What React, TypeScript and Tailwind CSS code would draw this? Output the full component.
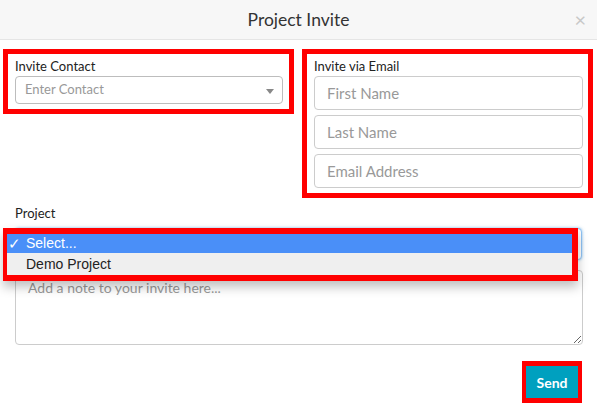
import React from 'react';

const inputCls =
  "block w-full h-[34px] rounded-[4px] border border-[#cccccc] bg-white px-3 text-[15px] text-[#333] placeholder:text-[#999] outline-none";

export default function App() {
  return (
    <div className="w-[597px] h-[416px] bg-white font-['Lato','Open_Sans',sans-serif] text-[#333] overflow-hidden">
      {/* Header */}
      <div className="relative flex h-10 items-center justify-center border-b border-[#e5e5e5] bg-[#f7f7f7]">
        <h1 className="text-[17.5px] leading-none text-[#333]">Project Invite</h1>
        <button className="absolute right-[11px] top-[9px] text-[20px] leading-none text-[#c8c8c8]">×</button>
      </div>

      {/* Contact / Email row */}
      <div className="mt-[9px] flex items-start gap-[8px] pl-[3px]">
        <div className="w-[291px] border-[5px] border-[#ff0000] pl-[7px] pr-[6px] pt-[3px] pb-[5px]">
          <label className="block text-[13px] leading-[18px] text-[#222]">Invite Contact</label>
          <div className="relative mt-[1px] flex h-[28px] items-center rounded-[4px] border border-[#bdbdbd] bg-white pl-[9px]">
            <span className="text-[13px] text-[#999]">Enter Contact</span>
            <span className="absolute right-[8px] top-[12px] h-0 w-0 border-x-[4px] border-t-[5px] border-x-transparent border-t-[#888]" />
          </div>
        </div>

        <div className="w-[291px] border-[5px] border-[#ff0000] pl-[7px] pr-[5px] pt-[3px] pb-[5px]">
          <label className="block text-[13px] leading-[18px] text-[#222]">Invite via Email</label>
          <div className="mt-[1px] flex flex-col gap-[5px]">
            <input className={inputCls} placeholder="First Name" />
            <input className={inputCls} placeholder="Last Name" />
            <input className={inputCls} placeholder="Email Address" />
          </div>
        </div>
      </div>

      {/* Project + note */}
      <div className="px-[15px]">
        <label className="mt-[6px] block text-[13px] leading-[18px] text-[#222]">Project</label>
        <div className="relative mt-[6px]">
          <div className="h-[32px] w-[567px] rounded-[4px] border border-[#8fc3f5] shadow-[0_0_3px_rgba(102,175,233,0.8)] bg-white" />
          {/* open native menu */}
          <div className="absolute left-[-12px] top-0 z-10 w-[575px] border-y-[6px] border-l-[4px] border-r-[6px] border-[#ff0000] bg-[#efefef] font-['Liberation_Sans',sans-serif] text-[14px] shadow-[0_6px_10px_rgba(0,0,0,0.25)]">
            <div className="flex h-[19px] items-center bg-[#4a8ff8] text-white">
              <span className="w-[19px] pl-[1px] text-[15px] leading-none">✓</span>
              <span>Select...</span>
            </div>
            <div className="flex h-[22px] items-center text-[#222]">
              <span className="w-[19px]" />
              <span>Demo Project</span>
            </div>
          </div>
        </div>
        <textarea
          className="mt-[10px] block h-[75px] w-[568px] rounded-[4px] border border-[#cccccc] px-3 py-[7px] text-[14px] leading-5 placeholder:text-[#999] outline-none"
          placeholder="Add a note to your invite here..."
        />
        <div className="mt-[16px] flex justify-end">
          <div className="border-x-4 border-y-[5px] border-[#ff0000]">
            <button className="block h-[32px] w-[52px] bg-[#00a0bf] text-[14px] font-bold text-white">Send</button>
          </div>
        </div>
      </div>
    </div>
  );
}
